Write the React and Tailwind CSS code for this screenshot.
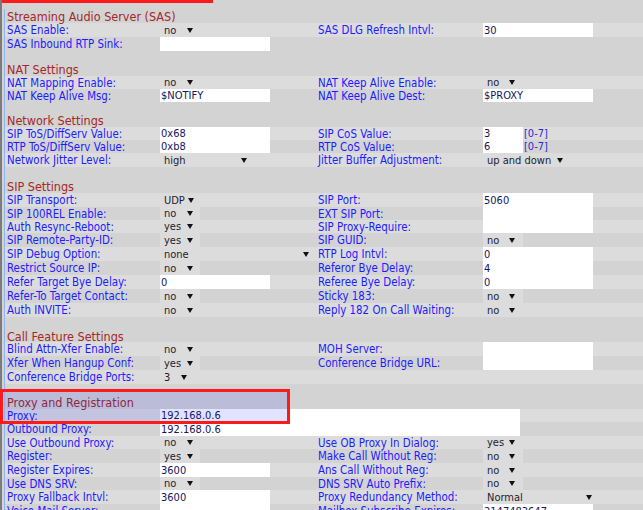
import React from 'react';

// one row of the settings table: label / value / label / value
const S = (v, w = 'w-[40px]', pr = 'pr-[7px]') => ({ t: 'sel', v, w, pr });
const I = (v, w = 'w-[110px]') => ({ t: 'in', v, w });
const C = (v) => ({ t: 'cos', v });

const rows = [
  { head: 'Streaming Audio Server (SAS)', h: 'h-[14px]' },
  { a: 'SAS Enable:', av: S('no'), b: 'SAS DLG Refresh Intvl:', bv: I('30'), h: 'h-[14px]' },
  { a: 'SAS Inbound RTP Sink:', av: I(''), h: 'h-[14px]' },
  { gap: true, h: 'h-[12px]' },
  { head: 'NAT Settings', h: 'h-[13px]' },
  { a: 'NAT Mapping Enable:', av: S('no'), b: 'NAT Keep Alive Enable:', bv: S('no', 'w-[40px]', 'pr-[8px]'), h: 'h-[13px]' },
  { a: 'NAT Keep Alive Msg:', av: I('$NOTIFY'), b: 'NAT Keep Alive Dest:', bv: I('$PROXY'), h: 'h-[13px]' },
  { gap: true, h: 'h-[12px]' },
  { head: 'Network Settings', h: 'h-[13px]' },
  { a: 'SIP ToS/DiffServ Value:', av: I('0x68'), b: 'SIP CoS Value:', bv: C('3'), h: 'h-[13px]' },
  { a: 'RTP ToS/DiffServ Value:', av: I('0xb8'), b: 'RTP CoS Value:', bv: C('6'), h: 'h-[13px]' },
  { a: 'Network Jitter Level:', av: S('high', 'w-[95px]', 'pr-[8px]'), b: 'Jitter Buffer Adjustment:', bv: S('up and down', 'w-[87px]', 'pr-[7px]'), h: 'h-[14px]' },
  { gap: true, h: 'h-[13px]' },
  { head: 'SIP Settings', h: 'h-[13px]' },
  { a: 'SIP Transport:', av: S('UDP', 'w-[40px]', 'pr-[6px]'), b: 'SIP Port:', bv: I('5060'), h: 'h-[14px]' },
  { a: 'SIP 100REL Enable:', av: S('no'), b: 'EXT SIP Port:', bv: I(''), h: 'h-[13px]' },
  { a: 'Auth Resync-Reboot:', av: S('yes'), b: 'SIP Proxy-Require:', bv: I(''), h: 'h-[13px]' },
  { a: 'SIP Remote-Party-ID:', av: S('yes'), b: 'SIP GUID:', bv: S('no', 'w-[40px]', 'pr-[8px]'), h: 'h-[14px]' },
  { a: 'SIP Debug Option:', av: S('none', 'w-[156px]', 'pr-[7px]'), b: 'RTP Log Intvl:', bv: I('0'), h: 'h-[14px]' },
  { a: 'Restrict Source IP:', av: S('no'), b: 'Referor Bye Delay:', bv: I('4'), h: 'h-[14px]' },
  { a: 'Refer Target Bye Delay:', av: I('0'), b: 'Referee Bye Delay:', bv: I('0'), h: 'h-[14px]' },
  { a: 'Refer-To Target Contact:', av: S('no'), b: 'Sticky 183:', bv: S('no', 'w-[40px]', 'pr-[8px]'), h: 'h-[14px]' },
  { a: 'Auth INVITE:', av: S('no'), b: 'Reply 182 On Call Waiting:', bv: S('no', 'w-[40px]', 'pr-[8px]'), h: 'h-[14px]' },
  { gap: true, h: 'h-[13px]' },
  { head: 'Call Feature Settings', h: 'h-[12px]' },
  { a: 'Blind Attn-Xfer Enable:', av: S('no'), b: 'MOH Server:', bv: I(''), h: 'h-[14px]' },
  { a: 'Xfer When Hangup Conf:', av: S('yes'), b: 'Conference Bridge URL:', bv: I(''), h: 'h-[14px]' },
  { a: 'Conference Bridge Ports:', av: S('3', 'w-[34px]', 'pr-[7px]'), h: 'h-[14px]' },
  { gap: true, h: 'h-[12px]' },
  { head: 'Proxy and Registration', h: 'h-[13px]' },
  { a: 'Proxy:', av: I('192.168.0.6', 'w-[360px]'), h: 'h-[13px]' },
  { a: 'Outbound Proxy:', av: I('192.168.0.6', 'w-[360px]'), h: 'h-[14px]' },
  { a: 'Use Outbound Proxy:', av: S('no'), b: 'Use OB Proxy In Dialog:', bv: S('yes', 'w-[40px]', 'pr-[8px]'), h: 'h-[13px]' },
  { a: 'Register:', av: S('yes'), b: 'Make Call Without Reg:', bv: S('no', 'w-[40px]', 'pr-[8px]'), h: 'h-[14px]' },
  { a: 'Register Expires:', av: I('3600'), b: 'Ans Call Without Reg:', bv: S('no', 'w-[40px]', 'pr-[8px]'), h: 'h-[14px]' },
  { a: 'Use DNS SRV:', av: S('no'), b: 'DNS SRV Auto Prefix:', bv: S('no', 'w-[40px]', 'pr-[8px]'), h: 'h-[13px]' },
  { a: 'Proxy Fallback Intvl:', av: I('3600'), b: 'Proxy Redundancy Method:', bv: S('Normal', 'w-[115px]', 'pr-[6px]'), h: 'h-[14px]' },
  { a: 'Voice Mail Server:', av: I(''), b: 'Mailbox Subscribe Expires:', bv: I('2147483647'), h: 'h-[14px]' },
];

const Arrow = () => (
  <svg width="6" height="5" viewBox="0 0 6 5" className="shrink-0">
    <path d="M0 0H6L3 5Z" fill="#111" />
  </svg>
);

const Value = ({ f }) => {
  if (!f) return null;
  if (f.t === 'sel') {
    return (
      <div className={`h-full flex items-center justify-between bg-[#dcdcdc] pl-[4px] ${f.w} ${f.pr}`}>
        <span className="text-[#1c1c30]">{f.v}</span>
        <Arrow />
      </div>
    );
  }
  if (f.t === 'cos') {
    return (
      <div className="h-full flex items-center">
        <div className="h-full w-[40px] bg-white pl-[1px] flex items-center text-[#16165a]">{f.v}</div>
        <span className="ml-[1px] text-[#2a2acc]">[0-7]</span>
      </div>
    );
  }
  return (
    <div className={`h-full shrink-0 bg-white pl-[1px] flex items-center text-[#16165a] ${f.w}`}>{f.v}</div>
  );
};

export default function App() {
  let n = 0;
  return (
    <div className="relative w-[643px] h-[510px] overflow-hidden flex bg-[#d3d3d3] text-[11px] leading-none font-['DejaVu_Sans_Condensed','DejaVu_Sans',sans-serif] font-stretch-condensed">
      <div className="w-[2px] shrink-0 bg-[#7c7c7c]" />
      <div className="flex-1 pl-[2px] pt-[9px] min-w-0">
        <div className="border-l border-[#8fb4f2]">
          {rows.map((r, i) => {
            if (r.head || r.gap) n = 0;
            else n += 1;
            const bg = !r.head && !r.gap && n % 2 === 1 ? 'bg-[#dcdcdc]' : 'bg-[#d3d3d3]';
            if (r.head) {
              return (
                <div key={i} className={`${r.h} ${bg} flex items-center pl-[2px] pt-[2px] text-[12.5px] text-[#a3282a]`}>
                  {r.head}
                </div>
              );
            }
            if (r.gap) return <div key={i} className={`${r.h} ${bg}`} />;
            return (
              <div key={i} className={`${r.h} ${bg} flex items-stretch whitespace-nowrap`}>
                <div className="w-[155px] shrink-0 pl-[2px] pt-[2px] flex items-center text-[11.4px] text-[#1c1cff]">{r.a}</div>
                <div className="w-[158px] shrink-0 flex items-stretch"><Value f={r.av} /></div>
                <div className="w-[165px] shrink-0 pt-[2px] flex items-center text-[11.4px] text-[#1c1cff]">{r.b}</div>
                <div className="flex-1 flex items-stretch"><Value f={r.bv} /></div>
              </div>
            );
          })}
        </div>
      </div>

      {/* screenshot annotations */}
      <div className="absolute left-[2px] top-0 w-[211px] h-[3px] bg-[#ff1a1a]" />
      <div className="absolute left-[5px] top-[392px] w-[282px] h-[30px] bg-[rgba(20,30,255,0.12)]" />
      <div className="absolute left-0 top-[389px] w-[290px] h-[35px] border-[3px] border-[#ff1a1a]" />
    </div>
  );
}
